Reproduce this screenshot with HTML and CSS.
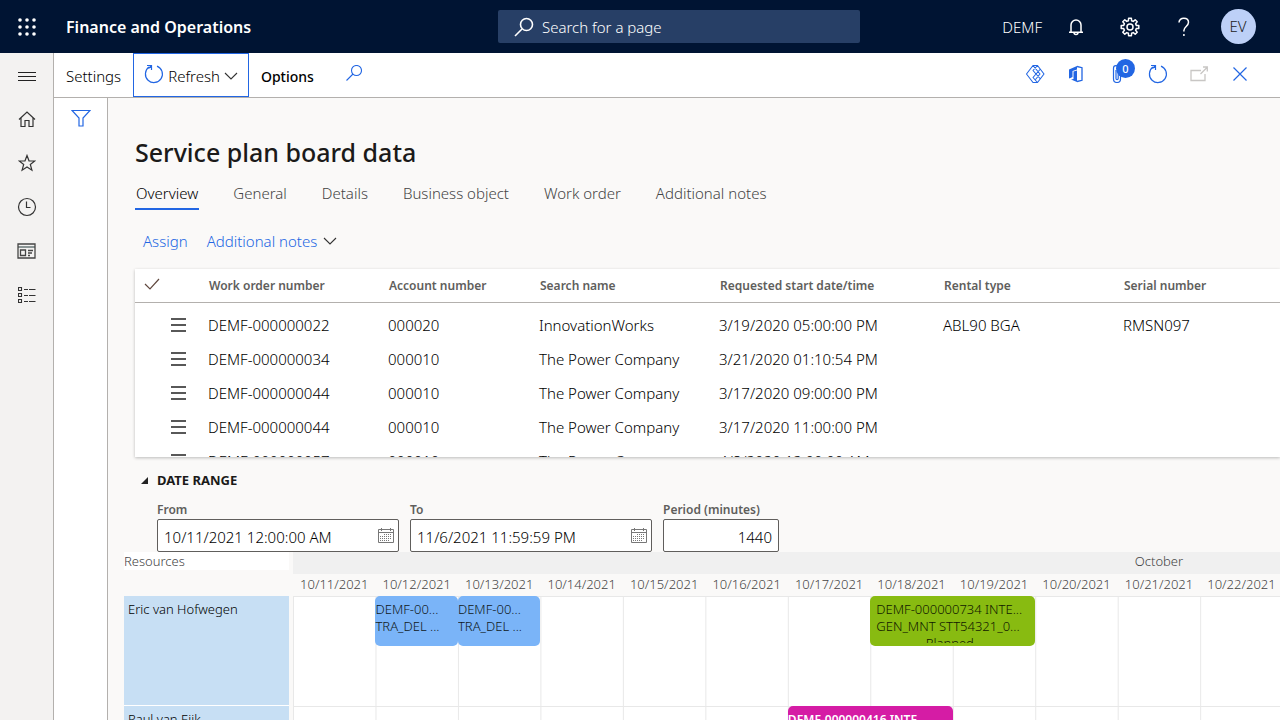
FILE: index.html
```html
<!DOCTYPE html>
<html lang="en">
<head>
    <meta charset="UTF-8">
    <meta name="viewport" content="width=device-width, initial-scale=1.0">
    <title>Service plan board data - Finance and Operations</title>
    <link rel="stylesheet" href="styles.css">
</head>
<body>
    <header class="topbar">
        <button class="icon-btn" aria-label="App launcher">
            <svg width="18" height="18" viewBox="0 0 18 18" fill="#fff"><circle cx="2" cy="2" r="1.800"/><circle cx="9" cy="2" r="1.800"/><circle cx="16" cy="2" r="1.800"/><circle cx="2" cy="9" r="1.800"/><circle cx="9" cy="9" r="1.800"/><circle cx="16" cy="9" r="1.800"/><circle cx="2" cy="16" r="1.800"/><circle cx="9" cy="16" r="1.800"/><circle cx="16" cy="16" r="1.800"/></svg>
        </button>
        <a class="brand" href="#">Finance and Operations</a>
        <div class="search">
            <svg width="20" height="20" viewBox="0 0 20 20" fill="none" stroke="#fff" stroke-width="1.6"><circle cx="12.5" cy="7.5" r="6"/><path d="M8 12L1 19"/></svg>
            <input type="text" class="search-input" aria-label="Search for a page" placeholder="Search for a page">
        </div>
        <div class="top-right">
            <a class="company" href="#">DEMF</a>
            <button class="icon-btn" aria-label="Notifications">
                <svg width="16" height="18" viewBox="0 0 16 18" fill="none" stroke="#fff" stroke-width="1.5"><path d="M3 14V7a5 5 0 0 1 10 0v7M1 14.2h14M6 14.5a2 2 0 0 0 4 0"/></svg>
            </button>
            <button class="icon-btn" aria-label="Settings menu">
                <svg width="20" height="20" viewBox="0 0 20 20" fill="none" stroke="#fff" stroke-width="1.5"><circle cx="10" cy="10" r="3"/><path stroke-linejoin="round" d="M8.400 3.700L8.600 1.200h2.800l.2 2.500 1.700.7 1.900-1.600 2 2-1.600 1.900.7 1.700 2.500.2v2.800l-2.500.2-.7 1.700 1.600 1.900-2 2-1.900-1.600-1.700.7-.2 2.500H8.600l-.2-2.500-1.700-.7-1.900 1.600-2-2 1.600-1.900-.7-1.700-2.500-.2V8.600l2.500-.2.7-1.700-1.600-1.900 2-2 1.900 1.600z"/></svg>
            </button>
            <button class="icon-btn" aria-label="Help">
                <svg width="12" height="20" viewBox="0 0 12 20" fill="none" stroke="#fff" stroke-width="1.5"><path d="M1 5.500C1 2.800 3.200 1.200 5.800 1.200c2.700 0 4.700 1.600 4.700 4.100 0 4-4.600 4.300-4.600 8.200v1"/><path d="M5.900 17v2"/></svg>
            </button>
            <button class="icon-btn" aria-label="Account"><span class="avatar">EV</span></button>
        </div>
    </header>

    <div class="shell">
        <nav class="sidebar" aria-label="Main">
            <button class="nav-btn menu-btn" aria-label="Expand the navigation pane">
                <svg width="18" height="10" viewBox="0 0 18 10" stroke="#222"><path d="M0 .5h18M0 4.500h18M0 8.500h18"/></svg>
            </button>
            <button class="nav-btn" aria-label="Home">
                <svg width="18" height="18" viewBox="0 0 18 18" fill="none" stroke="#333" stroke-width="1.2"><path d="M1 9.500L9 2l8 7.500M3 8v8.500h4v-6h4v6h4V8"/></svg>
            </button>
            <button class="nav-btn" aria-label="Favorites">
                <svg width="18" height="18" viewBox="0 0 18 18" fill="none" stroke="#333" stroke-width="1.2"><path d="M9 1.500l2 5.300 5.800.2-4.500 3.500 1.600 5.700L9 13l-4.900 3.200 1.600-5.700L1.200 7 7 6.800z"/></svg>
            </button>
            <button class="nav-btn" aria-label="Recent">
                <svg width="20" height="20" viewBox="0 0 20 20" fill="none" stroke="#333" stroke-width="1.200"><circle cx="10" cy="10" r="8.500"/><path d="M9.500 4.500v6h4"/></svg>
            </button>
            <button class="nav-btn" aria-label="Workspaces">
                <svg width="19" height="16" viewBox="0 0 19 16"><path fill="#8a9595" d="M1 3h17v2H1z"/><path fill="none" stroke="#444" stroke-width="1.300" d="M1 1h17v14H1zM3.500 7h5v5.500h-5zM11 7.500h5M11 10h4M11 12.500h2"/></svg>
            </button>
            <button class="nav-btn" aria-label="Modules">
                <svg width="18" height="17" viewBox="0 0 18 17" fill="none" stroke="#333" stroke-width="1.100"><path d="M.5.500h3v3h-3zM.5 6.500h3v3h-3zM.5 12.500h3v3h-3zM6 2.500h4M11 2.500h6.500M6 8.500h4M11 8.500h6.500M6 14.500h4M11 14.500h6.500"/></svg>
            </button>
        </nav>

        <div class="workarea">
            <div class="actionbar">
                <button class="action">Settings</button>
                <button class="action refresh">
                    <svg class="lifted" width="20" height="20" viewBox="0 0 20 20" fill="none" stroke="#2266e3" stroke-width="1.200"><path d="M13 2.100A8.500 8.500 0 1 1 5 3.100"/><path d="M3 1.500h4.500V6M7.500 1.500L4.500 4.500"/></svg>
                    Refresh
                    <svg width="14" height="8" viewBox="0 0 14 8" fill="none" stroke="#333" stroke-width="1.100"><path d="M1 1l6 6 6-6"/></svg>
                </button>
                <button class="action options">Options</button>
                <button class="action-search" aria-label="Search actions">
                    <svg width="16" height="16" viewBox="0 0 16 16" fill="none" stroke="#2266e3" stroke-width="1.100"><circle cx="10.500" cy="5.500" r="5"/><path d="M7 9L.5 15.500"/></svg>
                </button>
                <div class="page-tools">
                    <button class="tool" aria-label="Power Apps">
                        <svg width="20" height="20" viewBox="0 0 20 20" fill="none" stroke="#2266e3" stroke-width="1.100" stroke-linejoin="round"><path d="M8 1.500h4.500l6.500 8.500-6.500 8.500H8L1.500 10zM8 1.500l7 8.500-4.500 5.500M12.500 1.500L8 6.500l3 3.500 4-4.500M11 10l-3 3.500 4.500 5M11 10l4 4.500"/></svg>
                    </button>
                    <button class="tool" aria-label="Open in Microsoft Office">
                        <svg width="16" height="18" viewBox="0 0 16 18"><path fill="#2266e3" d="M1 4.500L9 1v3.500L4.500 6v6L2.500 13 1 13.500zM5.500 6.500L9 5.500V17l-6-2.500 2.500-.5z"/><path fill="none" stroke="#2266e3" stroke-width="1.300" d="M9 1.500l5 1.200v12.600l-5 1.200"/></svg>
                    </button>
                    <button class="tool attach" aria-label="Attachments, 0">
                        <svg width="10" height="18" viewBox="0 0 10 18" fill="none" stroke="#2266e3" stroke-width="1.200"><path d="M8.500 3v11a3.500 3.500 0 0 1-7 0V3a2.300 2.300 0 0 1 4.700 0v10.500a1.100 1.100 0 0 1-2.200 0V5"/></svg>
                        <span class="badge">0</span>
                    </button>
                    <button class="tool" aria-label="Refresh page">
                        <svg width="20" height="20" viewBox="0 0 20 20" fill="none" stroke="#2266e3" stroke-width="1.200"><path d="M13 2.100A8.500 8.500 0 1 1 5 3.100"/><path d="M3 1.500h4.500V6M7.500 1.500L4.500 4.500"/></svg>
                    </button>
                    <button class="tool" aria-label="Open in new window" disabled>
                        <svg width="18" height="16" viewBox="0 0 18 16" fill="none" stroke="#c8c6c4" stroke-width="1.300"><path d="M11 4.500H1v10h14V8M10.500 8L17 1.500M13 1h4.300v4.500"/></svg>
                    </button>
                    <button class="tool" aria-label="Close">
                        <svg width="14" height="14" viewBox="0 0 14 14" fill="none" stroke="#2266e3" stroke-width="1.200"><path d="M.5.5l13 13M13.500.5l-13 13"/></svg>
                    </button>
                </div>
            </div>

            <div class="page">
                <aside class="filter-pane">
                    <button class="filter-btn" aria-label="Show filters">
                        <svg width="20" height="18" viewBox="0 0 20 18" fill="none" stroke="#2266e3" stroke-width="1.200"><path d="M1 1.500h18l-7 7.500v8H8V9z"/></svg>
                    </button>
                </aside>

                <main class="content">
                    <h1 class="page-title">Service plan board data</h1>
                    <div class="tabs" role="tablist">
                        <button class="tab active" role="tab" aria-selected="true">Overview</button>
                        <button class="tab" role="tab">General</button>
                        <button class="tab" role="tab">Details</button>
                        <button class="tab" role="tab">Business object</button>
                        <button class="tab" role="tab">Work order</button>
                        <button class="tab" role="tab">Additional notes</button>
                    </div>
                    <div class="grid-actions">
                        <button class="link-btn">Assign</button>
                        <button class="link-btn">Additional notes
                            <svg width="14" height="8" viewBox="0 0 14 8" fill="none" stroke="#333" stroke-width="1.100"><path d="M1 1l6 6 6-6"/></svg>
                        </button>
                    </div>

                    <div class="grid-card">
                        <table class="orders">
                            <colgroup>
                                <col class="col-check"><col class="col-menu"><col class="col-order"><col class="col-account">
                                <col class="col-name"><col class="col-start"><col class="col-rental"><col>
                            </colgroup>
                            <thead>
                                <tr>
                                    <th class="check-cell"><svg width="16" height="12" viewBox="0 0 16 12" fill="none" stroke="#60483e" stroke-width="1.200"><path d="M1 6l5 5 9-10"/></svg></th>
                                    <th></th>
                                    <th>Work order number</th>
                                    <th>Account number</th>
                                    <th>Search name</th>
                                    <th>Requested start date/time</th>
                                    <th>Rental type</th>
                                    <th>Serial number</th>
                                </tr>
                            </thead>
                            <tbody>
                                <tr>
                                    <td></td>
                                    <td><svg class="row-icon" width="15" height="14" viewBox="0 0 15 14" stroke="#222" stroke-width="1.300"><path d="M0 1h15M0 7h15M0 13h15"/></svg></td>
                                    <td>DEMF-000000022</td><td>000020</td><td>InnovationWorks</td><td>3/19/2020 05:00:00 PM</td><td>ABL90 BGA</td><td>RMSN097</td>
                                </tr>
                                <tr>
                                    <td></td>
                                    <td><svg class="row-icon" width="15" height="14" viewBox="0 0 15 14" stroke="#222" stroke-width="1.300"><path d="M0 1h15M0 7h15M0 13h15"/></svg></td>
                                    <td>DEMF-000000034</td><td>000010</td><td>The Power Company</td><td>3/21/2020 01:10:54 PM</td><td></td><td></td>
                                </tr>
                                <tr>
                                    <td></td>
                                    <td><svg class="row-icon" width="15" height="14" viewBox="0 0 15 14" stroke="#222" stroke-width="1.300"><path d="M0 1h15M0 7h15M0 13h15"/></svg></td>
                                    <td>DEMF-000000044</td><td>000010</td><td>The Power Company</td><td>3/17/2020 09:00:00 PM</td><td></td><td></td>
                                </tr>
                                <tr>
                                    <td></td>
                                    <td><svg class="row-icon" width="15" height="14" viewBox="0 0 15 14" stroke="#222" stroke-width="1.300"><path d="M0 1h15M0 7h15M0 13h15"/></svg></td>
                                    <td>DEMF-000000044</td><td>000010</td><td>The Power Company</td><td>3/17/2020 11:00:00 PM</td><td></td><td></td>
                                </tr>
                                <tr>
                                    <td></td>
                                    <td><svg class="row-icon" width="15" height="14" viewBox="0 0 15 14" stroke="#222" stroke-width="1.300"><path d="M0 1h15M0 7h15M0 13h15"/></svg></td>
                                    <td>DEMF-000000057</td><td>000010</td><td>The Power Company</td><td>4/8/2020 12:00:00 AM</td><td></td><td></td>
                                </tr>
                            </tbody>
                        </table>
                    </div>

                    <section class="range">
                        <h2 class="range-title"><svg width="7" height="7" viewBox="0 0 7 7" fill="#222"><path d="M7 0v7H0z"/></svg>DATE RANGE</h2>
                        <div class="range-fields">
                            <div class="field">
                                <label for="from">From</label>
                                <div class="box">
                                    <input type="text" id="from" value="10/11/2021 12:00:00 AM">
                                    <button class="cal-btn" aria-label="Choose from date"><svg width="16" height="15" viewBox="0 0 16 15" fill="none" stroke="#777"><path d="M.5 1.500h15v13H.5zM.5 4.500h15M3.500 0v3M12.500 0v3"/><path stroke-dasharray="1 1" d="M6.500 6v7M8.500 6v7M10.500 6v7M12.500 6v5M4.500 8v5M2.500 8v5"/></svg></button>
                                </div>
                            </div>
                            <div class="field">
                                <label for="to">To</label>
                                <div class="box">
                                    <input type="text" id="to" value="11/6/2021 11:59:59 PM">
                                    <button class="cal-btn" aria-label="Choose to date"><svg width="16" height="15" viewBox="0 0 16 15" fill="none" stroke="#777"><path d="M.5 1.500h15v13H.5zM.5 4.500h15M3.500 0v3M12.500 0v3"/><path stroke-dasharray="1 1" d="M6.500 6v7M8.500 6v7M10.500 6v7M12.500 6v5M4.500 8v5M2.500 8v5"/></svg></button>
                                </div>
                            </div>
                            <div class="field field-small">
                                <label for="period">Period (minutes)</label>
                                <div class="box"><input type="text" id="period" value="1440"></div>
                            </div>
                        </div>
                    </section>

                    <section class="board">
                        <div class="resources">
                            <div class="resources-head"><span>Resources</span></div>
                            <div class="resource">Eric van Hofwegen</div>
                            <div class="resource">Paul van Eijk</div>
                        </div>
                        <div class="timeline">
                            <div class="month">October</div>
                            <div class="days">
                                <span>10/11/2021</span><span>10/12/2021</span><span>10/13/2021</span><span>10/14/2021</span>
                                <span>10/15/2021</span><span>10/16/2021</span><span>10/17/2021</span><span>10/18/2021</span>
                                <span>10/19/2021</span><span>10/20/2021</span><span>10/21/2021</span><span>10/22/2021</span>
                            </div>
                            <div class="lane">
                                <div class="job job-travel day-2">
                                    <div class="job-text"><div>DEMF-00...</div><div>TRA_DEL ...</div><div class="status">·</div></div>
                                </div>
                                <div class="job job-travel day-3">
                                    <div class="job-text"><div>DEMF-00...</div><div>TRA_DEL ...</div><div class="status">·</div></div>
                                </div>
                                <div class="job job-planned day-8">
                                    <div class="job-text"><div>DEMF-000000734 INTE...</div><div>GEN_MNT STT54321_0...</div><div class="status">Planned</div></div>
                                </div>
                            </div>
                            <div class="lane">
                                <div class="job job-late day-7">
                                    <div class="job-text"><div>DEMF-000000416 INTE...</div></div>
                                </div>
                            </div>
                        </div>
                    </section>
                </main>
            </div>
        </div>
    </div>
</body>
</html>
```
FILE: styles.css
```css
:root {
    --blue: #2266e3;
    --navy: #001433;
    --line: #b3b0ad;
    --text: #1b1a19;
    --muted: #605e5c;
}

* {
    box-sizing: border-box;
}

body {
    margin: 0;
    height: 100vh;
    display: flex;
    flex-direction: column;
    overflow: hidden;
    font-family: "Noto Sans", "Open Sans", sans-serif;
    font-size: 15px;
    font-weight: 300;
    color: #000;
    background: #faf9f8;
}

button, input {
    font: inherit;
    color: inherit;
}

button {
    padding: 0;
    border: none;
    background: none;
    cursor: pointer;
}

a {
    color: inherit;
    text-decoration: none;
}

svg {
    flex: none;
}

/* top bar */
.topbar {
    flex: none;
    height: 53px;
    display: grid;
    grid-template-columns: 54px 444fr 362fr 420fr;
    align-items: center;
    background: var(--navy);
    color: #fff;
}

.icon-btn {
    width: 54px;
    height: 53px;
    display: flex;
    align-items: center;
    justify-content: center;
}

.brand {
    padding-left: 12px;
    font-size: 16px;
    font-weight: 600;
}

.search {
    height: 33px;
    display: flex;
    align-items: center;
    gap: 8px;
    padding-left: 16px;
    background: #273f66;
    border-radius: 2px;
}

.search-input {
    flex: 1;
    min-width: 0;
    padding: 0;
    border: none;
    outline: none;
    background: none;
}

.search-input::placeholder {
    color: #fff;
    opacity: 1;
}

.top-right {
    display: flex;
    align-items: center;
    justify-content: flex-end;
    padding-right: 15px;
}

.company {
    padding-right: 7px;
}

.avatar {
    width: 35px;
    height: 35px;
    border-radius: 50%;
    background: #bdd0f7;
    color: #222;
    line-height: 35px;
    text-align: center;
}

/* layout */
.shell {
    flex: 1;
    min-height: 0;
    display: flex;
}

.sidebar {
    flex: none;
    width: 54px;
    border-right: 1px solid var(--line);
    background: #f3f2f1;
}

.nav-btn {
    width: 53px;
    height: 44px;
    display: flex;
    align-items: center;
    justify-content: center;
}

.menu-btn {
    padding-top: 3px;
}

.workarea {
    flex: 1;
    min-width: 0;
    display: flex;
    flex-direction: column;
}

.actionbar {
    flex: none;
    height: 45px;
    display: flex;
    align-items: stretch;
    border-bottom: 1px solid var(--line);
    background: #fff;
}

.action {
    padding: 2px 12px 0;
}

.refresh {
    display: flex;
    align-items: center;
    gap: 4px;
    padding: 2px 10px 0;
    border: 1px solid var(--blue);
}

.lifted {
    margin-bottom: 4px;
}

.options {
    font-size: 14px;
    font-weight: 500;
}

.action-search {
    padding: 0 20px;
}

.page-tools {
    display: flex;
    margin-left: auto;
    padding-right: 20px;
}

.tool {
    width: 41px;
    height: 42px;
    display: flex;
    align-items: center;
    justify-content: center;
}

.attach {
    position: relative;
}

.badge {
    position: absolute;
    top: 6px;
    left: 20px;
    width: 19px;
    height: 19px;
    border-radius: 50%;
    background: var(--blue);
    color: #fff;
    font-size: 11px;
    font-weight: 500;
    line-height: 19px;
}

.page {
    flex: 1;
    min-height: 0;
    display: flex;
}

.filter-pane {
    flex: none;
    width: 54px;
    border-right: 1px solid var(--line);
    background: #fff;
}

.filter-btn {
    width: 53px;
    height: 43px;
}

.content {
    flex: 1;
    min-width: 0;
    overflow: hidden;
}

.page-title {
    margin: 37px 0 0 27px;
    color: var(--text);
    font-size: 25px;
    font-weight: 500;
    line-height: 34px;
}

/* tabs */
.tabs {
    display: flex;
    gap: 33px;
    margin: 11px 0 0 27px;
}

.tab {
    padding: 0 1px 2px;
    height: 30px;
    border-bottom: 2px solid transparent;
    color: #444;
}

.tab.active {
    border-color: var(--blue);
    color: #000;
}

.grid-actions {
    display: flex;
    gap: 19px;
    margin: 20px 0 18px 35px;
}

.link-btn {
    display: flex;
    align-items: center;
    gap: 6px;
    height: 21px;
    color: var(--blue);
}

/* work order grid */
.grid-card {
    height: 188px;
    margin-left: 27px;
    overflow: hidden;
    background: #fff;
    box-shadow: 0 1px 3px rgba(0, 0, 0, 0.25);
}

.orders {
    width: 100%;
    table-layout: fixed;
    border-collapse: separate;
    border-spacing: 0;
}

.col-check { width: 36px; }
.col-menu { width: 37px; }
.col-order { width: 180px; }
.col-account { width: 151px; }
.col-name { width: 180px; }
.col-start { width: 224px; }
.col-rental { width: 180px; }

.orders th {
    height: 34px;
    padding: 0 0 0 1px;
    border-bottom: 1px solid var(--line);
    color: var(--muted);
    font-size: 12px;
    font-weight: 600;
    text-align: left;
    white-space: nowrap;
}

.orders .check-cell {
    padding-left: 9px;
}

.orders td {
    height: 34px;
    padding: 9px 0 0;
    color: #000;
    white-space: nowrap;
}

.row-icon {
    display: block;
}

/* date range */
.range {
    margin-left: 33px;
}

.range-title {
    display: flex;
    align-items: center;
    gap: 9px;
    margin: 12px 0 0;
    color: var(--text);
    font-size: 13px;
    font-weight: 700;
    line-height: 22px;
}

.range-fields {
    display: flex;
    gap: 11px;
    margin: 9px 0 0 16px;
}

.field {
    width: 242px;
}

.field-small {
    width: 116px;
}

.field label {
    display: block;
    color: var(--muted);
    font-size: 12px;
    font-weight: 600;
    line-height: 19px;
    white-space: nowrap;
}

.box {
    height: 33px;
    display: flex;
    align-items: center;
    border: 1px solid var(--muted);
    border-radius: 2px;
    background: #fff;
}

.box input {
    flex: 1;
    min-width: 0;
    padding: 2px 6px 0;
    border: none;
    outline: none;
    background: none;
}

.field-small input {
    text-align: right;
}

.cal-btn {
    height: 15px;
    padding-right: 4px;
    line-height: 1px;
}

/* plan board */
.board {
    display: flex;
    gap: 4px;
    margin-left: 16px;
    font-size: 13px;
    line-height: 17px;
}

.resources {
    flex: none;
    width: 165px;
}

.resources-head {
    height: 44px;
    color: #444;
}

.resources-head span {
    display: block;
    height: 18px;
    line-height: 18px;
    background: #fff;
}

.resource {
    height: 110px;
    padding: 5px 4px;
    border-bottom: 1px solid #fff;
    background: #c7dff4;
}

.timeline {
    flex: none;
    width: 1732px;
    color: #444;
}

.month {
    height: 22px;
    line-height: 19px;
    text-align: center;
    background: #f0f0f0;
}

.days, .lane {
    display: grid;
    grid-template-columns: repeat(21, 1fr);
}

.days {
    height: 22px;
    line-height: 20px;
    text-align: center;
}

.lane {
    height: 110px;
    align-items: start;
    border-top: 1px solid #e8e8e8;
    background: linear-gradient(to right, #e8e8e8 1px, #fff 1px) 0 0 / calc(100% / 21) 100%;
}

.job {
    grid-row: 1;
    height: 50px;
    margin-top: -1px;
    padding-top: 5px;
    border-radius: 5px;
    color: #101820;
    white-space: nowrap;
}

.job-text {
    height: 42px;
    overflow: hidden;
}

.status {
    text-align: center;
}

.day-2 { grid-column: 2; }
.day-3 { grid-column: 3; }
.day-7 { grid-column: 7 / span 2; }
.day-8 { grid-column: 8 / span 2; }

.job-travel {
    background: #7ab4f8;
}

.job-travel .status {
    padding-right: 9px;
}

.job-planned {
    padding: 5px 12px 0 6px;
    background: #88bb11;
    color: #101800;
}

.job-late {
    background: #d51ca5;
    color: #fff;
    font-size: 12px;
    font-weight: 600;
}
```
